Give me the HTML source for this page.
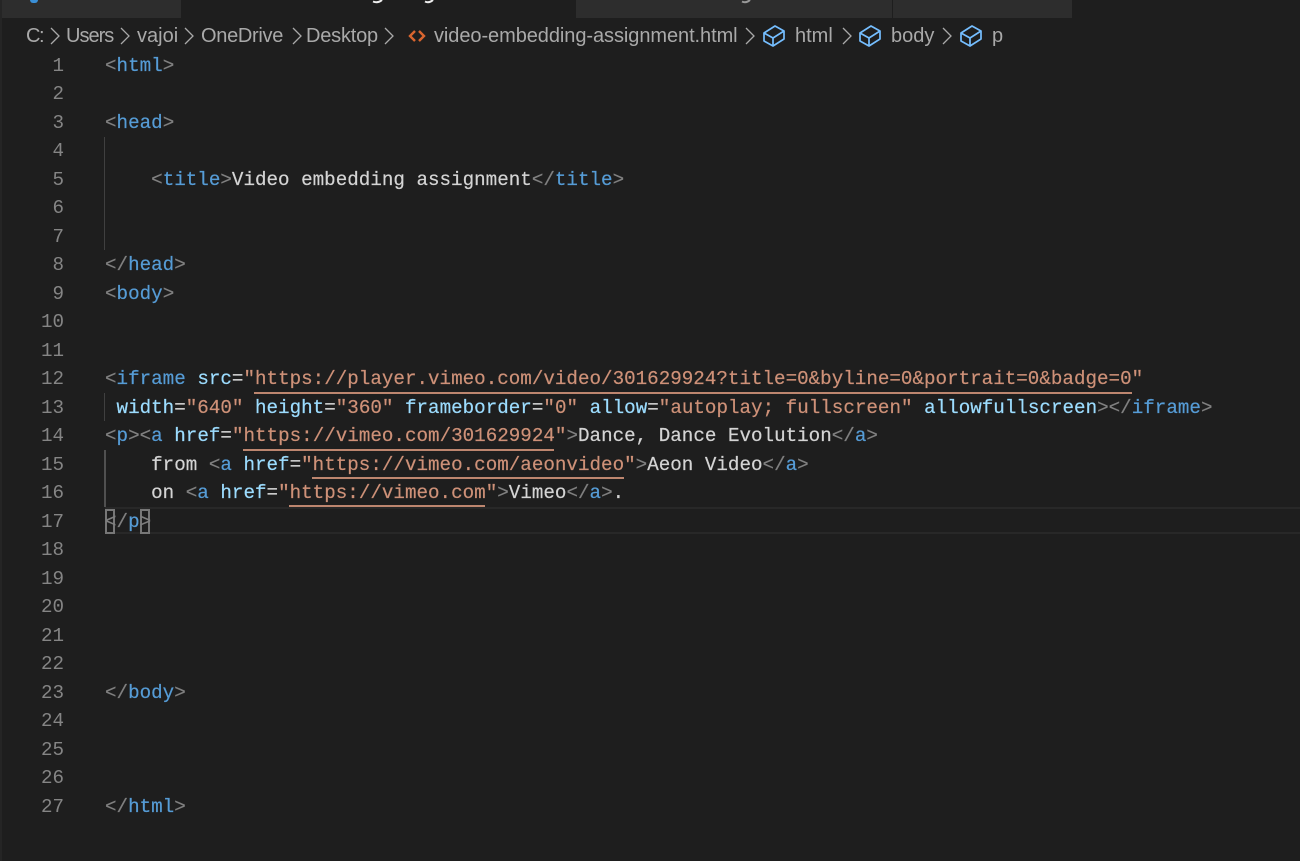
<!DOCTYPE html>
<html lang="en"><head><meta charset="utf-8"><title>Editor</title>
<style>
html,body{margin:0;padding:0;width:1300px;height:861px;overflow:hidden;background:#1e1e1e}
.a{position:absolute}
.tab{position:absolute;top:0;height:18px;background:#2d2d2d}
.bc{position:absolute;top:22px;height:28px;font:20px/28px "Liberation Sans",sans-serif;color:#a9a9a9;white-space:nowrap}
.n{position:absolute;left:0;width:64px;text-align:right;font:19.2px/28px "Liberation Mono",monospace;color:#858585;height:28px}
.l{position:absolute;left:105px;font:19.2px/28px "Liberation Mono",monospace;letter-spacing:.02px;white-space:pre;color:#d4d4d4;height:28px;-webkit-text-stroke:.2px currentColor}
i{font-style:normal}
.g{color:#808080}.t{color:#569cd6}.k{color:#9cdcfe}.s{color:#ce9178}.w{color:#d4d4d4}
.u{position:absolute;height:2px;background:#ce9178;opacity:.9}
</style></head><body>
<div class="a" style="left:0;top:0;width:2px;height:861px;background:#252525"></div>
<div class="tab" style="left:2px;width:179px"></div>
<div class="a" style="left:30px;top:0;width:8px;height:3px;background:#3a8fd6;border-radius:0 0 4px 4px"></div>
<div class="tab" style="left:576px;width:316px"></div>
<div class="tab" style="left:893px;width:179px"></div>
<svg class="a" style="left:0;top:0" width="800" height="6" fill="none">
<path d="M373 1.5q5 2 9-1.500M425 1.500q4 2 8-1.500" stroke="#eee" stroke-width="2"/>
<path d="M742 1.500q4 2 8-1.500" stroke="#999" stroke-width="2"/>
</svg>

<span class="bc" style="left:26px;letter-spacing:-1.4px">C:</span>
<span class="bc" style="left:66px;letter-spacing:-1px">Users</span>
<span class="bc" style="left:137px">vajoi</span>
<span class="bc" style="left:201px;letter-spacing:-.3px">OneDrive</span>
<span class="bc" style="left:306px;letter-spacing:-.2px">Desktop</span>
<span class="bc" style="left:434px;letter-spacing:-.07px">video-embedding-assignment.html</span>
<span class="bc" style="left:795px">html</span>
<span class="bc" style="left:891px">body</span>
<span class="bc" style="left:992px">p</span>

<svg class="a" style="left:0;top:20px" width="1010" height="30" fill="none">
<g stroke="#a9a9a9" stroke-width="1.300">
<path d="M51 8l8 8-8 8"/><path d="M121 8l8 8-8 8"/><path d="M185 8l8 8-8 8"/><path d="M293 8l8 8-8 8"/><path d="M385 8l8 8-8 8"/><path d="M746 8l8 8-8 8"/><path d="M843 8l8 8-8 8"/><path d="M943 8l8 8-8 8"/>
</g>
<g stroke="#d9652f" stroke-width="2.400"><path d="M415 11l-5 5 5 5"/><path d="M419 11l5 5-5 5"/></g>
<g stroke="#75beff" stroke-width="1.700" stroke-linejoin="round">
<path d="M764 13l11-7 9 5v8l-11 7-9-5z"/><path d="M764 13l9 5 11-7M773 18v8"/>
<path d="M860 13l11-7 9 5v8l-11 7-9-5z"/><path d="M860 13l9 5 11-7M869 18v8"/>
<path d="M961 13l11-7 9 5v8l-11 7-9-5z"/><path d="M961 13l9 5 11-7M970 18v8"/>
</g></svg>

<div class="n" style="top:52px">1</div><div class="n" style="top:80px">2</div><div class="n" style="top:109px">3</div><div class="n" style="top:137px">4</div><div class="n" style="top:166px">5</div><div class="n" style="top:194px">6</div><div class="n" style="top:223px">7</div><div class="n" style="top:251px">8</div><div class="n" style="top:280px">9</div><div class="n" style="top:308px">10</div><div class="n" style="top:337px">11</div><div class="n" style="top:365px">12</div><div class="n" style="top:394px">13</div><div class="n" style="top:422px">14</div><div class="n" style="top:451px">15</div><div class="n" style="top:479px">16</div><div class="n" style="top:508px">17</div><div class="n" style="top:536px">18</div><div class="n" style="top:565px">19</div><div class="n" style="top:593px">20</div><div class="n" style="top:622px">21</div><div class="n" style="top:650px">22</div><div class="n" style="top:679px">23</div><div class="n" style="top:707px">24</div><div class="n" style="top:736px">25</div><div class="n" style="top:764px">26</div><div class="n" style="top:793px">27</div>

<div class="a" style="left:104px;top:137px;width:1px;height:113px;background:#404040"></div>
<div class="a" style="left:104px;top:393px;width:1px;height:28px;background:#404040"></div>
<div class="a" style="left:104px;top:450px;width:2px;height:57px;background:#505050"></div>
<div class="a" style="left:105px;top:507px;width:1195px;height:27px;box-sizing:border-box;border-top:2px solid #282828;border-bottom:2px solid #282828"></div>
<div class="a" style="left:105px;top:509px;width:10px;height:25px;box-sizing:border-box;border:2px solid #777"></div>
<div class="a" style="left:140px;top:509px;width:10px;height:25px;box-sizing:border-box;border:2px solid #777"></div>

<div class="l" style="top:52px"><i class="g">&lt;</i><i class="t">html</i><i class="g">&gt;</i></div>
<div class="l" style="top:109px"><i class="g">&lt;</i><i class="t">head</i><i class="g">&gt;</i></div>
<div class="l" style="top:166px">    <i class="g">&lt;</i><i class="t">title</i><i class="g">&gt;</i><i class="w">Video embedding assignment</i><i class="g">&lt;/</i><i class="t">title</i><i class="g">&gt;</i></div>
<div class="l" style="top:251px"><i class="g">&lt;/</i><i class="t">head</i><i class="g">&gt;</i></div>
<div class="l" style="top:280px"><i class="g">&lt;</i><i class="t">body</i><i class="g">&gt;</i></div>
<div class="l" style="top:365px"><i class="g">&lt;</i><i class="t">iframe</i> <i class="k">src</i>=<i class="s">"https://player.vimeo.com/video/301629924?title=0&amp;byline=0&amp;portrait=0&amp;badge=0"</i></div>
<div class="l" style="top:394px"> <i class="k">width</i>=<i class="s">"640"</i> <i class="k">height</i>=<i class="s">"360"</i> <i class="k">frameborder</i>=<i class="s">"0"</i> <i class="k">allow</i>=<i class="s">"autoplay; fullscreen"</i> <i class="k">allowfullscreen</i><i class="g">&gt;&lt;/</i><i class="t">iframe</i><i class="g">&gt;</i></div>
<div class="l" style="top:422px"><i class="g">&lt;</i><i class="t">p</i><i class="g">&gt;&lt;</i><i class="t">a</i> <i class="k">href</i>=<i class="s">"https://vimeo.com/301629924"</i><i class="g">&gt;</i><i class="w">Dance, Dance Evolution</i><i class="g">&lt;/</i><i class="t">a</i><i class="g">&gt;</i></div>
<div class="l" style="top:451px">    from <i class="g">&lt;</i><i class="t">a</i> <i class="k">href</i>=<i class="s">"https://vimeo.com/aeonvideo"</i><i class="g">&gt;</i><i class="w">Aeon Video</i><i class="g">&lt;/</i><i class="t">a</i><i class="g">&gt;</i></div>
<div class="l" style="top:479px">    on <i class="g">&lt;</i><i class="t">a</i> <i class="k">href</i>=<i class="s">"https://vimeo.com"</i><i class="g">&gt;</i><i class="w">Vimeo</i><i class="g">&lt;/</i><i class="t">a</i><i class="g">&gt;</i>.</div>
<div class="l" style="top:508px"><i class="g">&lt;/</i><i class="t">p</i><i class="g">&gt;</i></div>
<div class="l" style="top:679px"><i class="g">&lt;/</i><i class="t">body</i><i class="g">&gt;</i></div>
<div class="l" style="top:793px"><i class="g">&lt;/</i><i class="t">html</i><i class="g">&gt;</i></div>

<div class="u" style="left:254px;top:392px;width:878px"></div>
<div class="u" style="left:243px;top:449px;width:311px"></div>
<div class="u" style="left:312px;top:477px;width:312px"></div>
<div class="u" style="left:289px;top:505px;width:196px"></div>
</body></html>
